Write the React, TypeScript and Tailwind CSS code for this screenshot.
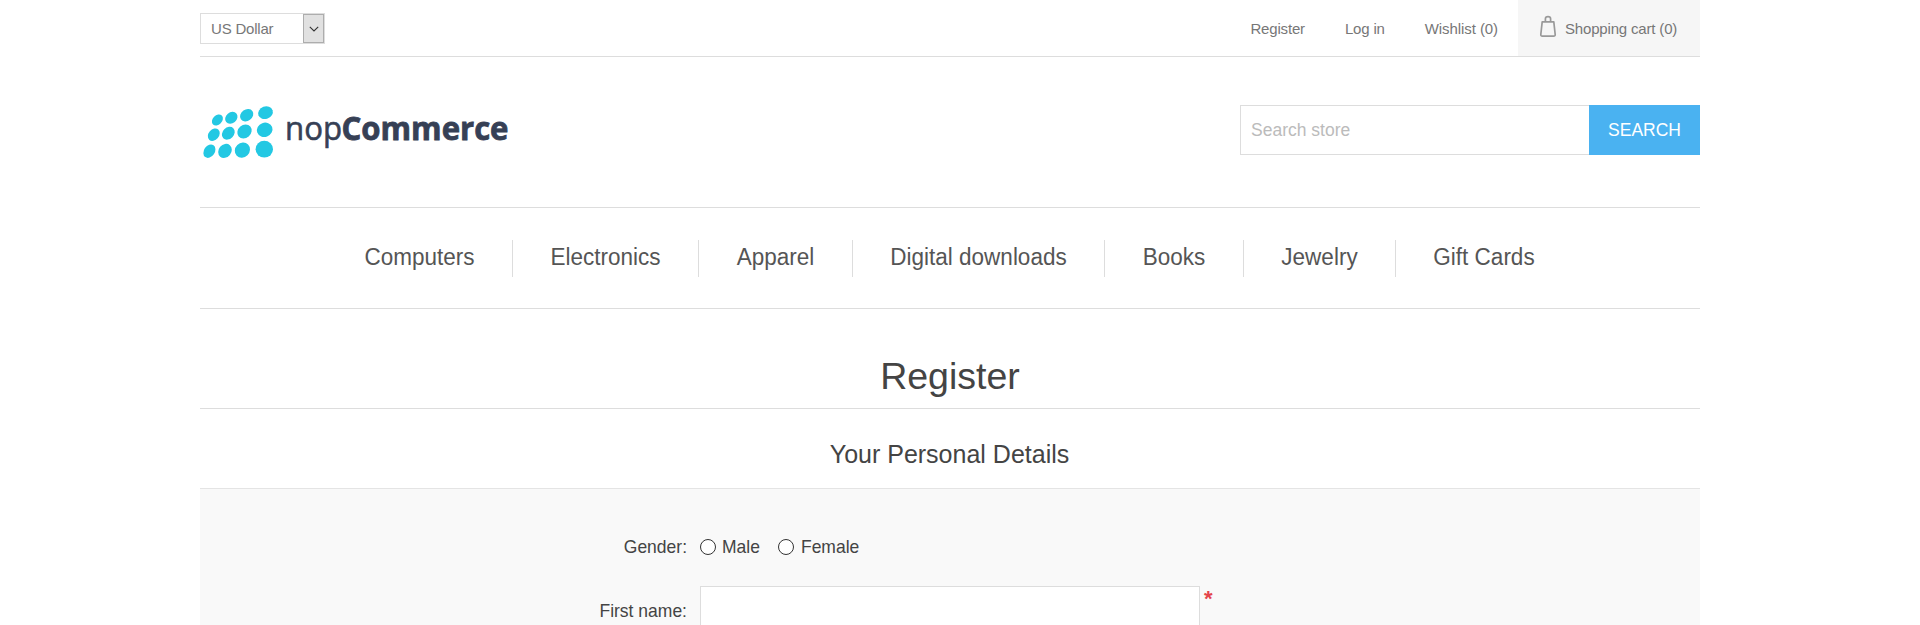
const categories = [
  { name: "Computers", width: "w-[186px]" },
  { name: "Electronics", width: "w-[186px]" },
  { name: "Apparel", width: "w-[154px]" },
  { name: "Digital downloads", width: "w-[252px]" },
  { name: "Books", width: "w-[139px]" },
  { name: "Jewelry", width: "w-[152px]" },
  { name: "Gift Cards", width: "w-[176px]" },
];

// cx, cy, rx, ry, rotation in logo coordinates
const dots = [
  [17.4, 13, 6.2, 4.7, -45],
  [31.3, 10.8, 6.7, 5.4, -40],
  [46.7, 8.2, 7.1, 5.7, -35],
  [65.5, 5.7, 7.5, 6.2, -20],
  [13.8, 27.7, 6.9, 5.2, -50],
  [28.3, 26.2, 7.1, 5.7, -45],
  [44.5, 24.5, 7.6, 6.5, -40],
  [64.7, 22.8, 7.9, 7.1, -20],
  [9.4, 44.2, 7.2, 5.4, -55],
  [25, 43.9, 7.5, 6.3, -50],
  [42.4, 43.1, 8, 7.2, -45],
  [64.3, 42.2, 8.7, 8.4, 0],
];

function Logo() {
  return (
    <svg className="-mt-[20px] overflow-visible" width="340" height="92" viewBox="0 -22 340 92" aria-label="nopCommerce">
      {dots.map(([cx, cy, rx, ry, a], i) => (
        <ellipse key={i} cx={cx} cy={cy} rx={rx} ry={ry} fill="#23c8e3" transform={`rotate(${a} ${cx} ${cy})`} />
      ))}
      <g fill="#364055" stroke="#364055" fontFamily="'Open Sans', 'Noto Sans', sans-serif" fontSize="32.5">
        <text x="85" y="33" strokeWidth="0.6" textLength="57" lengthAdjust="spacingAndGlyphs">nop</text>
        <text x="141.5" y="33" strokeWidth="0.8" fontWeight="700" textLength="167" lengthAdjust="spacingAndGlyphs">Commerce</text>
      </g>
    </svg>
  );
}

function TopBar() {
  return (
    <div className="flex h-[57px] justify-between border-b border-[#ddd] text-[15px] text-[#777]">
      <div className="mt-[13px] flex h-[31px] w-[125px] items-center border border-[#ddd] bg-white pl-[10px]">
        <span className="flex-1 pt-px tracking-[-0.2px]">US Dollar</span>
        <span className="flex h-[29px] w-[21px] items-center justify-center border border-[#adadad] bg-[#e1e1e1]">
          <svg width="10" height="6" viewBox="0 0 10 6" fill="none" stroke="#333" strokeWidth="1.1">
            <path d="M0.8 0.8 5 5 9.2 0.8" />
          </svg>
        </span>
      </div>
      <div className="flex h-14 items-center tracking-[-0.17px]">
        <a className="mr-[40px] pt-[2px]">Register</a>
        <a className="mr-[40px] pt-[2px]">Log in</a>
        <a className="mr-[20px] pt-[2px] tracking-[-0.08px]">Wishlist (0)</a>
        <a className="flex h-full w-[182px] items-center bg-[#f6f6f6] pl-[21px]">
          <svg className="-mt-[3px] mr-[8px]" width="18" height="23" viewBox="0 0 18 23" fill="none" stroke="#999" strokeWidth="1.7">
            <path d="M3.2 6.8H14.8L16.2 19.5Q16.3 21.2 14.6 21.2H3.4Q1.7 21.2 1.8 19.5Z" strokeLinejoin="round" />
            <path d="M6.4 6.5V3.8Q6.4 1.6 9 1.6T11.6 3.8V6.5" />
          </svg>
          <span className="pt-[2px]">Shopping cart (0)</span>
        </a>
      </div>
    </div>
  );
}

export default function App() {
  return (
    <div className="h-[625px] overflow-hidden bg-white font-['Liberation_Sans',Arial,sans-serif] text-[#444]">
      <div className="ml-[200px] w-[1500px]">
        <TopBar />
        <header className="flex h-[150px] items-start justify-between pt-[48px]">
          <Logo />
          <div className="flex h-[50px] text-[17.5px]">
            <input
              className="w-[349px] border border-r-0 border-[#ddd] px-[10px] outline-none placeholder:text-[#bbb]"
              placeholder="Search store"
            />
            <button className="w-[111px] bg-[#4ab2f1] text-white">SEARCH</button>
          </div>
        </header>
        <nav className="flex h-[102px] items-start border-y border-[#ddd] pt-[32px] pl-[127px] text-[22.5px] text-[#555]">
          {categories.map((c) => (
            <a
              key={c.name}
              className={`${c.width} flex h-[37px] items-center justify-center border-r border-[#ddd] pb-px whitespace-nowrap last:border-r-0`}
            >
              <span className="scale-y-107">{c.name}</span>
            </a>
          ))}
        </nav>
        <h1 className="flex h-[100px] items-end justify-center border-b border-[#ddd] pb-[4px] text-[37.5px] leading-[56px]">
          Register
        </h1>
        <h2 className="flex h-[79px] items-center justify-center pt-[13px] pr-px text-[25px]">Your Personal Details</h2>
        <form className="h-[200px] border-t border-[#e4e4e4] bg-[#f9f9f9] pt-[38px] text-[17.5px]">
          <div className="flex h-[40px] items-center">
            <span className="w-[487px] scale-y-105 text-right">Gender:</span>
            <input
              type="radio"
              name="gender"
              className="ml-[13px] size-4 appearance-none rounded-full border border-[#333] bg-white"
            />
            <span className="ml-[6px] scale-y-105">Male</span>
            <input
              type="radio"
              name="gender"
              className="ml-[18px] size-4 appearance-none rounded-full border border-[#333] bg-white"
            />
            <span className="ml-[7px] scale-y-105">Female</span>
          </div>
          <div className="mt-[19px] flex h-[50px]">
            <span className="w-[487px] scale-y-105 self-center text-right">First name:</span>
            <input className="ml-[13px] w-[500px] border border-[#ddd] bg-white" />
            <span className="-mt-[2px] ml-[4px] text-[22px] leading-[29px] font-bold text-[#e4434b]">*</span>
          </div>
        </form>
      </div>
    </div>
  );
}
